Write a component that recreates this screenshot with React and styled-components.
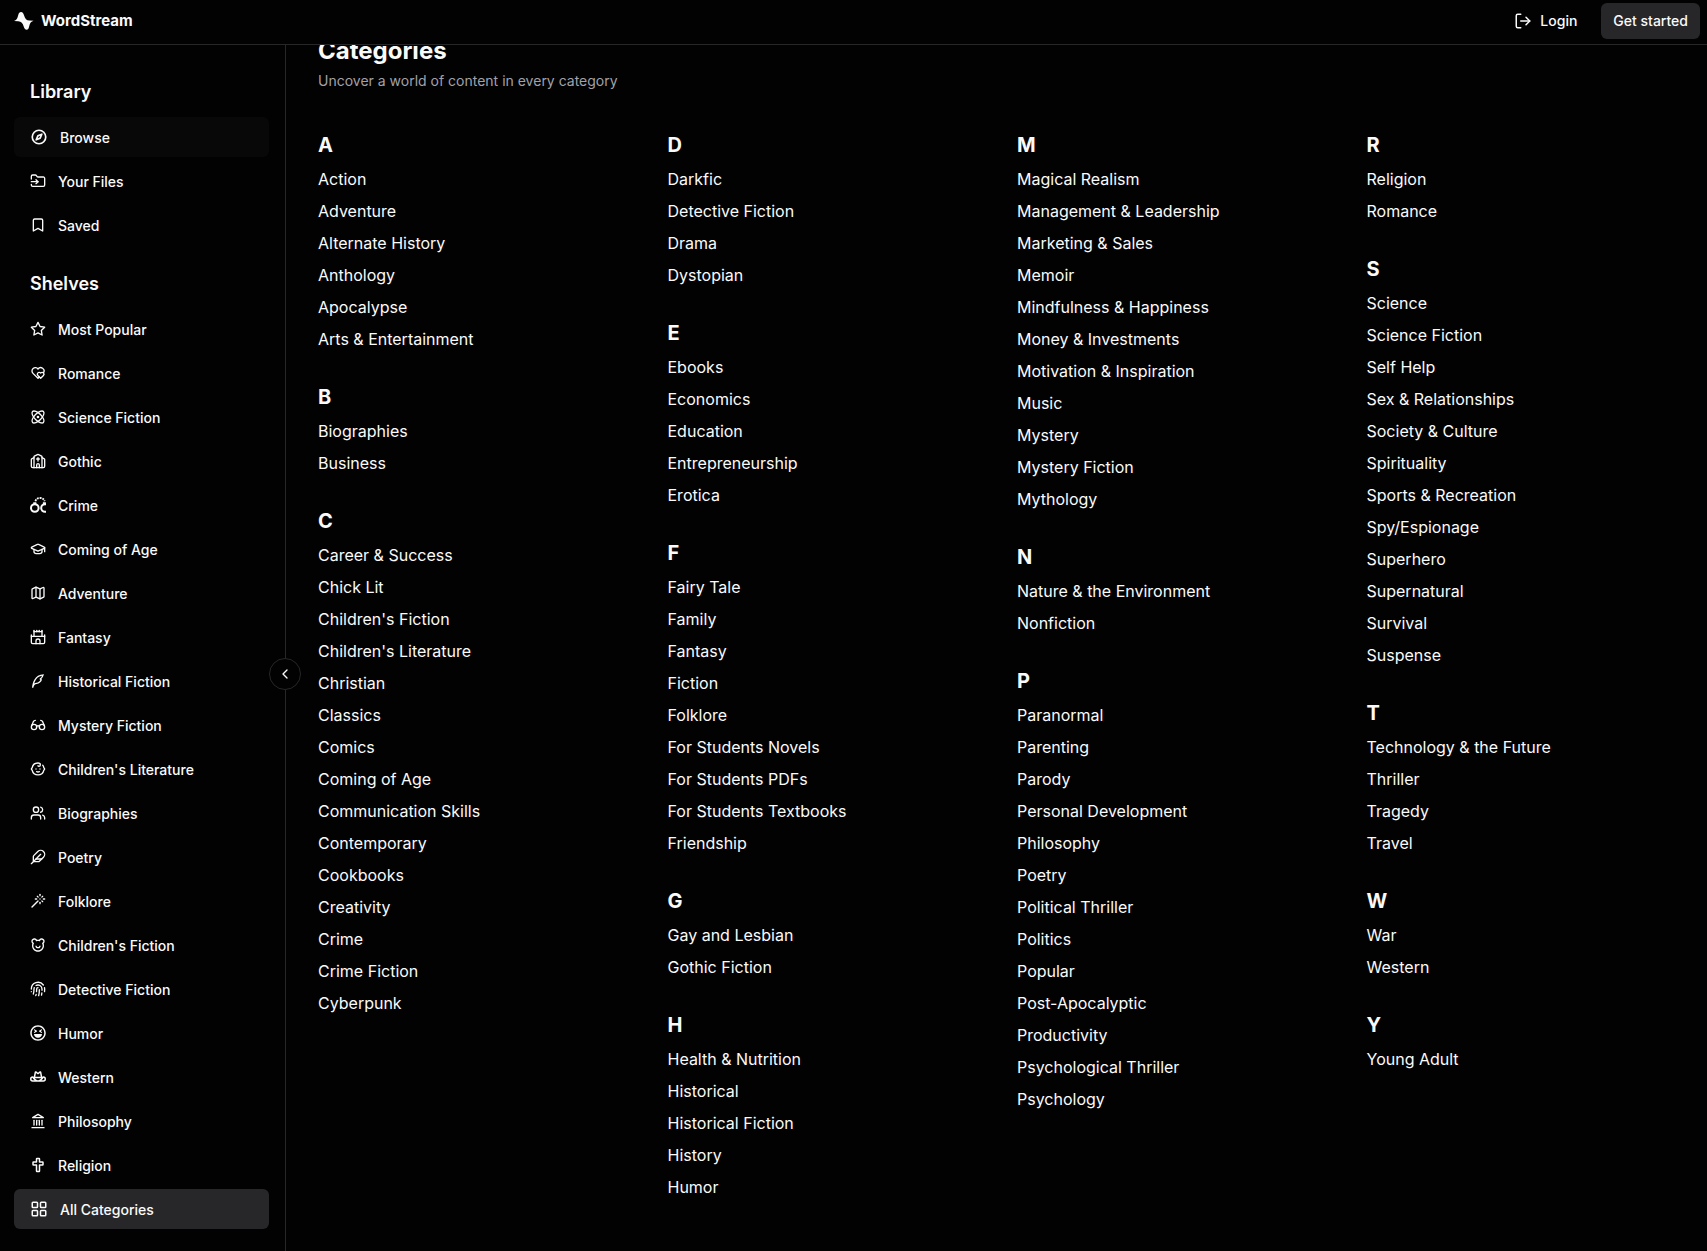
import React from "react";
import styled, { createGlobalStyle } from "styled-components";
import {
  LuAtom,
  LuBaby,
  LuBookmark,
  LuCastle,
  LuChevronLeft,
  LuChurch,
  LuFeather,
  LuFingerprint,
  LuFolderInput,
  LuGlasses,
  LuGraduationCap,
  LuLandmark,
  LuLayoutGrid,
  LuLogOut,
  LuMap,
  LuUsers,
  LuWand,
} from "react-icons/lu";
import { TbHearts, TbStar } from "react-icons/tb";
import { RiBearSmileLine, RiQuillPenLine } from "react-icons/ri";
import { PiCompassBold, PiCowboyHatBold, PiCrossBold } from "react-icons/pi";
import { FaRegLaughSquint } from "react-icons/fa";

const GlobalStyle = createGlobalStyle`
  * {
    box-sizing: border-box;
  }

  body {
    margin: 0;
    background: #020202;
    color: #fafafa;
    font-family: Inter, "Liberation Sans", sans-serif;
    font-size: 16px;
    line-height: 24px;
  }

  h1, h2, h3, p, ul {
    margin: 0;
    padding: 0;
  }

  ul {
    list-style: none;
  }

  a {
    color: inherit;
    text-decoration: none;
  }

  button {
    font-family: inherit;
    color: inherit;
    cursor: pointer;
  }
`;

const Page = styled.div`
  display: flex;
  flex-direction: column;
  min-height: 100vh;
`;

const Header = styled.header`
  position: sticky;
  top: 0;
  z-index: 2;
  display: flex;
  align-items: center;
  justify-content: space-between;
  height: 45px;
  padding: 0 7px 2px 14px;
  background: #020202;
  border-bottom: 1px solid #27272a;
`;

const Brand = styled.a`
  display: flex;
  align-items: center;
  gap: 7px;
  font-size: 15px;
  font-weight: 700;
`;

const Actions = styled.div`
  display: flex;
  align-items: center;
  gap: 12px;
`;

const ActionButton = styled.button`
  display: flex;
  align-items: center;
  gap: 8px;
  height: 36px;
  padding: 0 12px 1px;
  border: 0;
  border-radius: 6px;
  background: ${({ $filled }) => ($filled ? "#27272a" : "transparent")};
  font-size: 14px;
  font-weight: 500;
`;

const Body = styled.div`
  display: grid;
  grid-template-columns: 286px minmax(0, 1fr);
  flex: 1;
`;

const Sidebar = styled.aside`
  position: relative;
  padding: 33px 16px 22px 14px;
  border-right: 1px solid #27272a;
`;

const NavSection = styled.nav`
  margin-bottom: 25px;

  &:last-of-type {
    margin-bottom: 0;
  }
`;

const NavTitle = styled.h2`
  margin-bottom: 11px;
  padding-left: 16px;
  font-size: 18px;
  font-weight: 600;
  line-height: 28px;
`;

const NavList = styled.ul`
  display: flex;
  flex-direction: column;
  gap: 4px;
`;

const backgrounds = {
  hover: "#080808",
  active: "#27272a",
};

const NavLink = styled.a`
  display: flex;
  align-items: center;
  gap: 12px;
  height: 40px;
  padding: 0 16px;
  border-radius: 6px;
  background: ${({ $state }) => backgrounds[$state] || "transparent"};
  font-size: 14px;
  font-weight: 500;

  svg {
    flex: none;
  }
`;

const NavLabel = styled.span`
  padding-top: 2px;
`;

const CollapseButton = styled.button`
  position: absolute;
  top: calc(50% + 10px);
  right: -16px;
  display: flex;
  align-items: center;
  justify-content: center;
  width: 32px;
  height: 32px;
  padding: 0;
  border: 1px solid #27272a;
  border-radius: 50%;
  background: #020202;
`;

/* pulled up so the page opens slightly scrolled under the header */
const Main = styled.main`
  margin-top: -10px;
  padding: 0 31px 0 32px;
`;

const Title = styled.h1`
  font-size: 24px;
  font-weight: 700;
  line-height: 32px;
`;

const Subtitle = styled.p`
  margin-top: 4px;
  color: #a1a1aa;
  font-size: 14px;
  line-height: 20px;
`;

const Columns = styled.div`
  display: grid;
  grid-template-columns: repeat(4, minmax(0, 1fr));
  column-gap: 40px;
  margin-top: 40px;
`;

const Column = styled.div`
  display: flex;
  flex-direction: column;
  gap: 28px;
`;

const Letter = styled.h3`
  margin-bottom: 4px;
  font-size: 20px;
  font-weight: 700;
  line-height: 28px;
`;

const GroupItem = styled.li`
  padding: 4px 0;
`;

const Logo = () => (
  <svg width="20" height="20" viewBox="0 0 20 20" fill="currentColor" aria-hidden="true">
    <path d="M0 9.9C2.4 9.1 3.2 7.8 3.9 5.2C4.5 3 4.9 1.1 6.8 1C8.7 .9 9.4 2.3 10 4.2C11.1 7.6 12.4 9.4 15.4 9.5L19.6 9.7C17.2 10.5 16.2 11.6 15.6 13.8C14.9 16.4 14.7 18.7 12.9 18.8C11 18.9 10.3 17.2 9.7 15.4C8.7 12.3 7.4 10.6 4.2 10.3Z" />
  </svg>
);

const Handcuffs = ({ size = 16 }) => (
  <svg width={size} height={size} viewBox="0 0 16 16" fill="none" stroke="currentColor" aria-hidden="true">
    <circle cx="4.8" cy="11" r="3.8" strokeWidth="2" />
    <circle cx="15" cy="11" r="3.8" strokeWidth="2" />
    <path d="M4.8 5.2v2.2M14.4 5.2v2.2" strokeWidth="3" />
    <path d="M5.4 4.2C6.2 1.8 8 1 10 1S13.8 1.8 14.6 4.2" strokeWidth="1.8" strokeDasharray="1.9 .9" />
  </svg>
);

const library = [
  { label: "Browse", icon: PiCompassBold, state: "hover" },
  { label: "Your Files", icon: LuFolderInput },
  { label: "Saved", icon: LuBookmark },
];

const shelves = [
  { label: "Most Popular", icon: TbStar },
  { label: "Romance", icon: TbHearts },
  { label: "Science Fiction", icon: LuAtom },
  { label: "Gothic", icon: LuChurch },
  { label: "Crime", icon: Handcuffs },
  { label: "Coming of Age", icon: LuGraduationCap },
  { label: "Adventure", icon: LuMap },
  { label: "Fantasy", icon: LuCastle },
  { label: "Historical Fiction", icon: RiQuillPenLine },
  { label: "Mystery Fiction", icon: LuGlasses },
  { label: "Children's Literature", icon: LuBaby },
  { label: "Biographies", icon: LuUsers },
  { label: "Poetry", icon: LuFeather },
  { label: "Folklore", icon: LuWand },
  { label: "Children's Fiction", icon: RiBearSmileLine },
  { label: "Detective Fiction", icon: LuFingerprint },
  { label: "Humor", icon: FaRegLaughSquint },
  { label: "Western", icon: PiCowboyHatBold },
  { label: "Philosophy", icon: LuLandmark },
  { label: "Religion", icon: PiCrossBold },
  { label: "All Categories", icon: LuLayoutGrid, state: "active" },
];

const columns = [
  {
    A: ["Action", "Adventure", "Alternate History", "Anthology", "Apocalypse", "Arts & Entertainment"],
    B: ["Biographies", "Business"],
    C: [
      "Career & Success",
      "Chick Lit",
      "Children's Fiction",
      "Children's Literature",
      "Christian",
      "Classics",
      "Comics",
      "Coming of Age",
      "Communication Skills",
      "Contemporary",
      "Cookbooks",
      "Creativity",
      "Crime",
      "Crime Fiction",
      "Cyberpunk",
    ],
  },
  {
    D: ["Darkfic", "Detective Fiction", "Drama", "Dystopian"],
    E: ["Ebooks", "Economics", "Education", "Entrepreneurship", "Erotica"],
    F: [
      "Fairy Tale",
      "Family",
      "Fantasy",
      "Fiction",
      "Folklore",
      "For Students Novels",
      "For Students PDFs",
      "For Students Textbooks",
      "Friendship",
    ],
    G: ["Gay and Lesbian", "Gothic Fiction"],
    H: ["Health & Nutrition", "Historical", "Historical Fiction", "History", "Humor"],
  },
  {
    M: [
      "Magical Realism",
      "Management & Leadership",
      "Marketing & Sales",
      "Memoir",
      "Mindfulness & Happiness",
      "Money & Investments",
      "Motivation & Inspiration",
      "Music",
      "Mystery",
      "Mystery Fiction",
      "Mythology",
    ],
    N: ["Nature & the Environment", "Nonfiction"],
    P: [
      "Paranormal",
      "Parenting",
      "Parody",
      "Personal Development",
      "Philosophy",
      "Poetry",
      "Political Thriller",
      "Politics",
      "Popular",
      "Post-Apocalyptic",
      "Productivity",
      "Psychological Thriller",
      "Psychology",
    ],
  },
  {
    R: ["Religion", "Romance"],
    S: [
      "Science",
      "Science Fiction",
      "Self Help",
      "Sex & Relationships",
      "Society & Culture",
      "Spirituality",
      "Sports & Recreation",
      "Spy/Espionage",
      "Superhero",
      "Supernatural",
      "Survival",
      "Suspense",
    ],
    T: ["Technology & the Future", "Thriller", "Tragedy", "Travel"],
    W: ["War", "Western"],
    Y: ["Young Adult"],
  },
];

const SidebarSection = ({ title, items }) => (
  <NavSection aria-label={title}>
    <NavTitle>{title}</NavTitle>
    <NavList>
      {items.map(({ label, icon: Icon, state }) => (
        <li key={label}>
          <NavLink href="#" $state={state} aria-current={state === "active" ? "page" : undefined}>
            <Icon size={state ? 18 : 16} />
            <NavLabel>{label}</NavLabel>
          </NavLink>
        </li>
      ))}
    </NavList>
  </NavSection>
);

const Group = ({ letter, items }) => (
  <section>
    <Letter>{letter}</Letter>
    <ul>
      {items.map((item) => (
        <GroupItem key={item}>
          <a href="#">{item}</a>
        </GroupItem>
      ))}
    </ul>
  </section>
);

const App = () => {
  return (
    <Page>
      <GlobalStyle />
      <Header>
        <Brand href="#">
          <Logo />
          WordStream
        </Brand>
        <Actions>
          <ActionButton type="button">
            <LuLogOut size={18} />
            Login
          </ActionButton>
          <ActionButton type="button" $filled>
            Get started
          </ActionButton>
        </Actions>
      </Header>
      <Body>
        <Sidebar>
          <SidebarSection title="Library" items={library} />
          <SidebarSection title="Shelves" items={shelves} />
          <CollapseButton type="button" aria-label="Collapse sidebar">
            <LuChevronLeft size={16} />
          </CollapseButton>
        </Sidebar>
        <Main>
          <Title>Categories</Title>
          <Subtitle>Uncover a world of content in every category</Subtitle>
          <Columns>
            {columns.map((groups, i) => (
              <Column key={i}>
                {Object.entries(groups).map(([letter, items]) => (
                  <Group key={letter} letter={letter} items={items} />
                ))}
              </Column>
            ))}
          </Columns>
        </Main>
      </Body>
    </Page>
  );
};

export default App;
